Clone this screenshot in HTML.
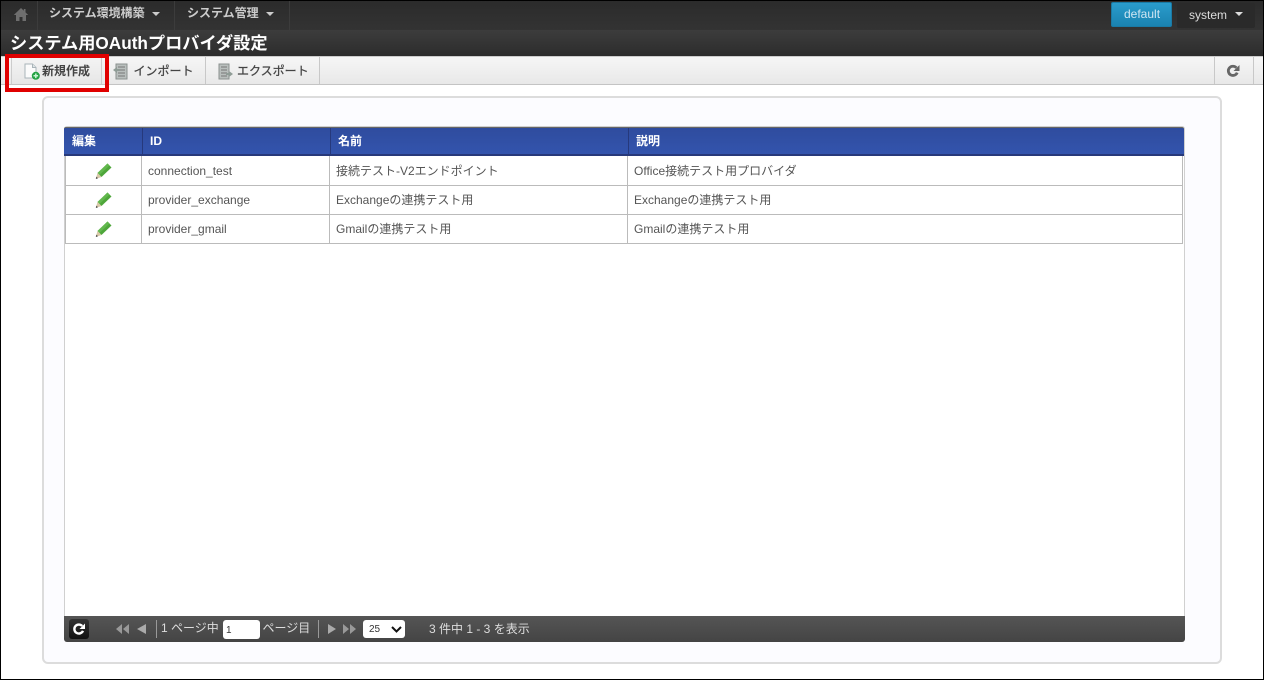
<!DOCTYPE html>
<html lang="ja"><head><meta charset="utf-8"><title>システム用OAuthプロバイダ設定</title>
<style>
html,body{margin:0;padding:0;background:#fff}
body{width:1264px;height:680px;position:relative;overflow:hidden;font-family:"Liberation Sans","Noto Sans CJK JP",sans-serif;font-size:12px;color:#555}
div,span,svg{position:absolute;box-sizing:border-box}
#w{left:0;top:0;width:1264px;height:680px;filter:blur(.35px)}
.t{white-space:nowrap;line-height:16px}
.nav{color:#ccc;font-size:12px;font-weight:bold;top:5px}
.tb{color:#444;font-size:12px;font-weight:bold;top:63px}
.sep{top:0;width:1px;height:30px;background:#3c3c3c}
.tsep{top:57px;width:1px;height:27px;background:#c8c8c8}
.th{top:133px;color:#fff;font-weight:bold;font-size:12px}
.cell{color:#555;font-size:12px}
.vl{top:156px;width:1px;height:88px;background:#bbb}
.hl{left:65px;width:1118px;height:1px;background:#bbb}
.pg{color:#ddd;font-size:12px}
</style></head><body><div id="w">
<div style="left:0;top:0;width:1264px;height:30px;background:linear-gradient(#2b2b2b,#333)"></div>
<div style="left:0;top:30px;width:1264px;height:26px;background:linear-gradient(#3c3c3c,#2c2c2c)"></div>
<div class="sep" style="left:37px"></div><div class="sep" style="left:174px"></div><div class="sep" style="left:289px"></div>
<svg style="left:13px;top:7px" width="16" height="15" viewBox="0 0 16 15"><path d="M8 1L0.8 8H3V14H6.5V10H9.5V14H13V8H15.2L12.5 5.4V2H10.8V3.8Z" fill="#6e6e6e"/></svg>
<div class="t nav" style="left:49px">システム環境構築</div>
<div style="left:152px;top:12px;border:4px solid transparent;border-top:4px solid #ccc;border-bottom:0"></div>
<div class="t nav" style="left:187px">システム管理</div>
<div style="left:266px;top:12px;border:4px solid transparent;border-top:4px solid #ccc;border-bottom:0"></div>
<div style="left:1111px;top:2px;width:61px;height:25px;background:linear-gradient(#2a9ccc,#1a82b0);border:1px solid #1a7aa5;border-radius:2px"></div>
<div class="t" style="left:1124px;top:6px;color:#cfe6f2;font-size:12px">default</div>
<div style="left:1177px;top:3px;width:78px;height:25px;background:#2a2a2a;border-radius:2px"></div>
<div class="t" style="left:1189px;top:7px;color:#ddd;font-size:12px">system</div>
<div style="left:1235px;top:12px;border:4px solid transparent;border-top:4px solid #ddd;border-bottom:0"></div>
<div class="t" style="left:10px;top:33px;color:#fff;font-size:17.2px;font-weight:bold;line-height:21px">システム用OAuthプロバイダ設定</div>

<div style="left:0;top:56px;width:1264px;height:29px;background:linear-gradient(#f6f6f6,#e8e8e8);border-top:1px solid #ccc;border-bottom:1px solid #c4c4c4"></div>
<div style="left:11px;top:57px;width:91px;height:27px;background:linear-gradient(#f4f4f4,#e6e6e6);border-left:1px solid #ccc;border-right:1px solid #ccc"></div>
<div class="tsep" style="left:205px"></div><div class="tsep" style="left:319px"></div><div class="tsep" style="left:1214px"></div><div class="tsep" style="left:1253px"></div>
<svg style="left:23px;top:63px" width="17" height="17" viewBox="0 0 17 17"><path d="M2 1H9.5L13 4.5V15H2Z" fill="#fbfbfb" stroke="#a9b4b9"/><path d="M9.5 1V4.5H13" fill="#dfe6e8" stroke="#a9b4b9"/><circle cx="12.8" cy="12.8" r="4" fill="#25a244"/><path d="M12.8 10.5V15.1M10.5 12.8H15.1" stroke="#c9f5d3" stroke-width="1.5"/></svg>
<div class="t tb" style="left:42px">新規作成</div>
<svg style="left:113px;top:63px" width="16" height="17" viewBox="0 0 16 17"><rect x="3" y="1" width="11" height="15" fill="#b9bfbd" stroke="#8b918f"/><path d="M5 4H12M5 7H12M5 10H12M5 13H12" stroke="#777"/><path d="M0 7L4 4V6H7V8H4V10Z" fill="#8f9c96"/></svg>
<div class="t tb" style="left:133.5px;font-weight:normal;-webkit-text-stroke:.25px #444">インポート</div>
<svg style="left:218px;top:63px" width="16" height="17" viewBox="0 0 16 17"><rect x="1" y="1" width="10" height="15" fill="#b9bfbd" stroke="#8b918f"/><path d="M3 4H9M3 7H9M3 10H9M3 13H9" stroke="#777"/><path d="M15 11L11 8V10H8V12H11V14Z" fill="#8f9c96"/></svg>
<div class="t tb" style="left:237px;font-weight:normal;-webkit-text-stroke:.25px #444">エクスポート</div>
<svg style="left:1226px;top:64px" width="14" height="14" viewBox="0 0 14 14"><path d="M11.2 8.6A4.6 4.6 0 1 1 10.4 3.8" fill="none" stroke="#666" stroke-width="2.8"/><path d="M13.5 1V7H7.5Z" fill="#666"/></svg>

<div style="left:5px;top:54px;width:104px;height:38px;border:4px solid #e00000"></div>

<div style="left:42px;top:96px;width:1180px;height:568px;background:#fcfcff;border:2px solid #dcdcdc;border-radius:6px"></div>
<div style="left:64px;top:126px;width:1121px;height:516px;background:#fff;border:1px solid #d0d0d0;border-radius:3px"></div>
<div style="left:64px;top:127px;width:1120px;height:29px;background:linear-gradient(#2f4c9e,#3354ad);border-top:1px solid #666;border-bottom:2px solid #27397a;border-radius:2px 2px 0 0"></div>
<div style="left:142px;top:128px;width:1px;height:27px;background:#26397c"></div>
<div style="left:330px;top:128px;width:1px;height:27px;background:#26397c"></div>
<div style="left:628px;top:128px;width:1px;height:27px;background:#26397c"></div>
<div class="t th" style="left:72px">編集</div><div class="t th" style="left:150px">ID</div><div class="t th" style="left:338px">名前</div><div class="t th" style="left:636px">説明</div>

<div class="hl" style="top:185px"></div><div class="hl" style="top:214px"></div><div class="hl" style="top:243px"></div>
<div class="vl" style="left:65px"></div><div class="vl" style="left:141px"></div><div class="vl" style="left:329px"></div><div class="vl" style="left:627px"></div><div class="vl" style="left:1182px"></div>

<svg style="left:95px;top:163px" width="17" height="17" viewBox="0 0 17 17"><path d="M12.5 .5L16.5 4.5L6.5 14L2.5 10Z" fill="#4ea63a"/><path d="M12.5 .5L14.5 2.5L4.5 12L2.5 10Z" fill="#62b84d"/><path d="M2.5 10L6.5 14L.8 16Z" fill="#d8c8a8"/><path d="M1.4 13.6L3 15.2L.8 16Z" fill="#444"/></svg>
<svg style="left:95px;top:192px" width="17" height="17" viewBox="0 0 17 17"><path d="M12.5 .5L16.5 4.5L6.5 14L2.5 10Z" fill="#4ea63a"/><path d="M12.5 .5L14.5 2.5L4.5 12L2.5 10Z" fill="#62b84d"/><path d="M2.5 10L6.5 14L.8 16Z" fill="#d8c8a8"/><path d="M1.4 13.6L3 15.2L.8 16Z" fill="#444"/></svg>
<svg style="left:95px;top:221px" width="17" height="17" viewBox="0 0 17 17"><path d="M12.5 .5L16.5 4.5L6.5 14L2.5 10Z" fill="#4ea63a"/><path d="M12.5 .5L14.5 2.5L4.5 12L2.5 10Z" fill="#62b84d"/><path d="M2.5 10L6.5 14L.8 16Z" fill="#d8c8a8"/><path d="M1.4 13.6L3 15.2L.8 16Z" fill="#444"/></svg>

<div class="t cell" style="left:148px;top:163px">connection_test</div>
<div class="t cell" style="left:336px;top:163px">接続テスト-V2エンドポイント</div>
<div class="t cell" style="left:634px;top:163px">Office接続テスト用プロバイダ</div>
<div class="t cell" style="left:148px;top:192px">provider_exchange</div>
<div class="t cell" style="left:336px;top:192px">Exchangeの連携テスト用</div>
<div class="t cell" style="left:634px;top:192px">Exchangeの連携テスト用</div>
<div class="t cell" style="left:148px;top:221px">provider_gmail</div>
<div class="t cell" style="left:336px;top:221px">Gmailの連携テスト用</div>
<div class="t cell" style="left:634px;top:221px">Gmailの連携テスト用</div>

<div style="left:64px;top:616px;width:1121px;height:26px;background:linear-gradient(#555,#444);border-radius:0 0 3px 3px"></div>
<div style="left:69px;top:619px;width:20px;height:20px;background:linear-gradient(#333,#111);border-radius:3px"></div>
<svg style="left:72px;top:622px" width="14" height="14" viewBox="0 0 14 14"><path d="M11 8.8A4.5 4.5 0 1 1 10.2 4" fill="none" stroke="#fff" stroke-width="2.4"/><path d="M13 1.5V7H7.5Z" fill="#fff"/></svg>
<svg style="left:115px;top:623px" width="34" height="12" viewBox="0 0 34 12"><path d="M7 1V11L1 6ZM14 1V11L8 6Z" fill="#999"/><path d="M31 1V11L22 6Z" fill="#aaa"/></svg>
<div style="left:156px;top:620px;width:1px;height:18px;background:#999"></div>
<div class="t pg" style="left:161px;top:620px">1 ページ中</div>
<div style="left:223px;top:620px;width:37px;height:19px;background:#fff;border-radius:3px;color:#333;font-size:10px;line-height:21px;padding-left:3px">1</div>
<div class="t pg" style="left:262.5px;top:620px">ページ目</div>
<div style="left:318px;top:620px;width:1px;height:18px;background:#999"></div>
<svg style="left:327px;top:623px" width="32" height="12" viewBox="0 0 32 12"><path d="M1 1V11L9 6Z" fill="#aaa"/><path d="M16 1V11L22 6ZM23 1V11L29 6Z" fill="#999"/></svg>
<div style="left:363px;top:620px;width:42px;height:18px;background:#fff;border-radius:3px;color:#333;font-size:10px;line-height:19px;padding-left:6px">25</div>
<svg style="left:391px;top:626px" width="11" height="7" viewBox="0 0 11 7"><path d="M1 1L5.5 5.5L10 1" fill="none" stroke="#111" stroke-width="2"/></svg>
<div class="t pg" style="left:429px;top:621px">3 件中 1 - 3 を表示</div>
</div>
<div style="left:0;top:0;width:1264px;height:680px;border:1px solid #000"></div>
</body></html>
